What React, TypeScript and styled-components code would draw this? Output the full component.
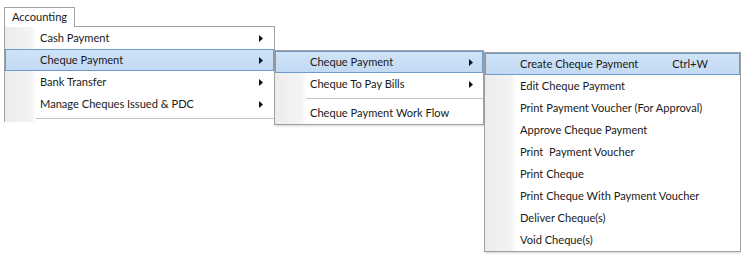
import React from "react";
import styled, { createGlobalStyle } from "styled-components";

type Entry =
  | { kind: "item"; label: string; shortcut?: string; sub?: boolean; active?: boolean }
  | { kind: "sep" };

const mainMenu: Entry[] = [
  { kind: "item", label: "Cash Payment", sub: true },
  { kind: "item", label: "Cheque Payment", sub: true, active: true },
  { kind: "item", label: "Bank Transfer", sub: true },
  { kind: "item", label: "Manage Cheques Issued & PDC", sub: true },
  { kind: "sep" },
];

const chequeMenu: Entry[] = [
  { kind: "item", label: "Cheque Payment", sub: true, active: true },
  { kind: "item", label: "Cheque To Pay Bills", sub: true },
  { kind: "sep" },
  { kind: "item", label: "Cheque Payment Work Flow" },
];

const actionMenu: Entry[] = [
  { kind: "item", label: "Create Cheque Payment", shortcut: "Ctrl+W", active: true },
  { kind: "item", label: "Edit Cheque Payment" },
  { kind: "item", label: "Print Payment Voucher (For Approval)" },
  { kind: "item", label: "Approve Cheque Payment" },
  { kind: "item", label: "Print\u00a0 Payment Voucher" },
  { kind: "item", label: "Print Cheque" },
  { kind: "item", label: "Print Cheque With Payment Voucher" },
  { kind: "item", label: "Deliver Cheque(s)" },
  { kind: "item", label: "Void Cheque(s)" },
];

const GlobalStyle = createGlobalStyle`
  html, body {
    margin: 0;
    background: #ffffff;
  }
  body {
    font-family: "Segoe UI", Lato, "Liberation Sans", sans-serif;
    font-size: 11.1px;
    color: #1a1a1a;
  }
`;

const MenuBar = styled.div`
  padding: 7px 0 0 4px;
  width: 741px;
  height: 255px;
  box-sizing: border-box;
  overflow: hidden;
`;

const Tab = styled.div`
  position: relative;
  z-index: 2;
  width: 71px;
  height: 20px;
  box-sizing: border-box;
  margin-bottom: -1px;
  padding-left: 7px;
  border: 1px solid #a3a3a3;
  border-bottom: none;
  background: #ffffff;
  line-height: 17px;
`;

const Menu = styled.ul<{ $width: number; $shift?: number }>`
  position: ${(p) => (p.$shift !== undefined ? "absolute" : "relative")};
  top: 0;
  left: ${(p) => (p.$shift !== undefined ? `calc(100% + ${p.$shift}px)` : "0")};
  z-index: 1;
  width: ${(p) => p.$width}px;
  box-sizing: border-box;
  margin: 0;
  padding: 0;
  list-style: none;
  border: 1px solid #a0a0a0;
  border-bottom: ${(p) => (p.$shift !== undefined ? "1px solid #a0a0a0" : "none")};
  background: linear-gradient(to right, #ececec 0, #f4f4f4 27px, #ffffff 31px);
  box-shadow: ${(p) => (p.$shift !== undefined ? "1px 1px 2px rgba(0, 0, 0, 0.18)" : "none")};
`;

const Item = styled.li<{ $active?: boolean; $gap: number }>`
  position: relative;
  display: flex;
  align-items: center;
  height: 22px;
  box-sizing: border-box;
  padding: 0 ${(p) => p.$gap}px 0 34px;
  border: 1px solid ${(p) => (p.$active ? "#6f9bcb" : "transparent")};
  background: ${(p) => (p.$active ? "linear-gradient(#cfe3f8, #c2daf3)" : "transparent")};
  white-space: nowrap;
  line-height: 20px;
`;

const Label = styled.span`
  flex: 1;
`;

const Shortcut = styled.span`
  margin-left: 12px;
`;

const Separator = styled.li`
  height: 7px;
  margin-left: 31px;
  padding-top: 3px;
  box-sizing: border-box;
  &::before {
    content: "";
    display: block;
    height: 1px;
    background: #c6c6c6;
  }
`;

function Arrow() {
  return (
    <svg width="4" height="7" viewBox="0 0 4 7">
      <path d="M0 0 L4 3.5 L0 7 Z" fill="#111" />
    </svg>
  );
}

function MenuList({
  entries,
  width,
  shift,
  gap,
  child,
}: {
  entries: Entry[];
  width: number;
  shift?: number;
  gap: number;
  child?: React.ReactNode;
}) {
  return (
    <Menu $width={width} $shift={shift}>
      {entries.map((e, i) =>
        e.kind === "sep" ? (
          <Separator key={i} />
        ) : (
          <Item key={i} $active={e.active} $gap={gap}>
            <Label>{e.label}</Label>
            {e.shortcut && <Shortcut>{e.shortcut}</Shortcut>}
            {e.sub && <Arrow />}
            {e.active && child}
          </Item>
        )
      )}
    </Menu>
  );
}

export default function App() {
  return (
    <>
      <GlobalStyle />
      <MenuBar>
        <Tab>Accounting</Tab>
        <MenuList
          entries={mainMenu}
          width={271}
          gap={10}
          child={
            <MenuList
              entries={chequeMenu}
              width={210}
              shift={1}
              gap={9}
              child={
                <MenuList entries={actionMenu} width={257} shift={2} gap={31} />
              }
            />
          }
        />
      </MenuBar>
    </>
  );
}
